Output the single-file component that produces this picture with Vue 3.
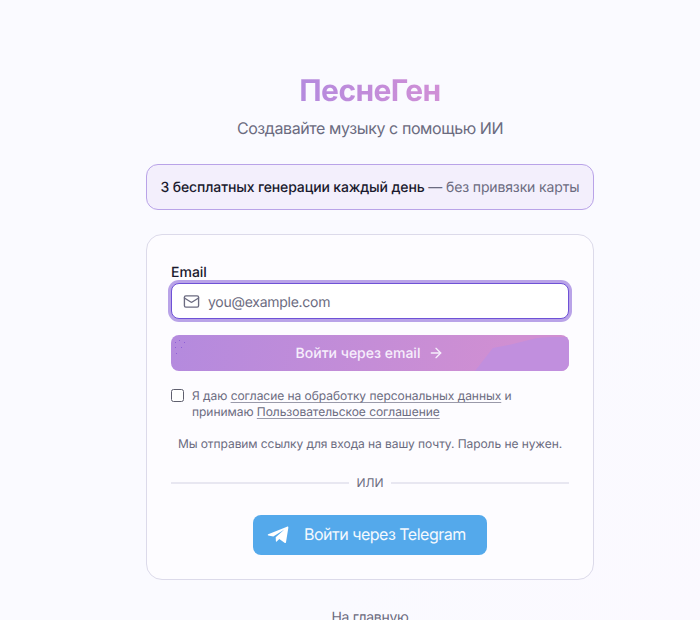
<script setup>
</script>

<template>
  <div class="page">
    <div class="column">
      <header class="head">
        <h1 class="logo">ПеснеГен</h1>
        <p class="sub">Создавайте музыку с помощью ИИ</p>
      </header>
      <div class="banner"><span><strong>3 бесплатных генерации каждый день</strong> — без привязки карты</span></div>
      <div class="card">
        <label class="label">Email</label>
        <div class="field">
          <svg class="mail" width="17" height="17" viewBox="0 0 24 24" fill="none" stroke="currentColor" stroke-width="1.9" stroke-linecap="round" stroke-linejoin="round"><rect x="2" y="4" width="20" height="16" rx="2"/><path d="m22 7-8.97 5.7a1.94 1.94 0 0 1-2.06 0L2 7"/></svg>
          <span class="ph">you@example.com</span>
        </div>
        <button class="primary">
          <span class="blob"></span>
          <span class="dots"><i v-for="n in 6" :key="n" :class="'d' + n"></i></span>
          <span class="ptext">Войти через email</span>
          <svg class="arrow" width="16" height="16" viewBox="0 0 24 24" fill="none" stroke="currentColor" stroke-width="2" stroke-linecap="round" stroke-linejoin="round"><path d="M5 12h14"/><path d="m12 5 7 7-7 7"/></svg>
        </button>
        <div class="consent">
          <span class="box"></span>
          <p>Я даю <a>согласие на обработку персональных данных</a> и принимаю <a>Пользовательское соглашение</a></p>
        </div>
        <p class="note">Мы отправим ссылку для входа на вашу почту. Пароль не нужен.</p>
        <div class="divider"><span></span><em>ИЛИ</em><span></span></div>
        <div class="tgwrap">
          <button class="tg">
            <svg class="plane" width="22" height="18" viewBox="0 0 22 18" fill="#fff"><path d="M1.2 8.2 20 .7c.9-.3 1.5.2 1.3 1.2L19 16.2c-.2.9-.8 1.1-1.5.6l-5.2-3.8-2.6 2.5c-.4.4-.8.2-.8-.3l-.2-3.9L17.4 3.6 6.3 10.4 1.3 9.4c-.7-.2-.7-.9-.1-1.2z"/></svg>
            <span class="tgtext">Войти через Telegram</span>
          </button>
        </div>
      </div>
      <a class="home">На главную</a>
    </div>
  </div>
</template>

<style>
html, body { margin: 0; padding: 0; overflow: hidden; }
</style>

<style scoped>
.page {
  width: 700px;
  height: 620px;
  overflow: hidden;
  background: radial-gradient(circle at 100% 100%, #fbf9ff 0, #fafaff 40%);
  font-family: Inter, "Noto Sans", sans-serif;
  text-rendering: geometricPrecision;
  color: #1a1a2e;
}
.column { width: 448px; margin-left: 146px; padding-top: 73px; }
.head { text-align: center; }
.logo {
  margin: 0;
  font-size: 30px;
  line-height: 36px;
  font-weight: 700;
  letter-spacing: -0.6px;
  background: linear-gradient(90deg, #b48ade, #d08fd6);
  -webkit-background-clip: text;
  background-clip: text;
  color: transparent;
  display: inline-block;
}
.sub { margin: 7px 0 0; font-size: 16px; line-height: 24px; letter-spacing: -0.41px; color: #6b6b80; }
.banner {
  margin-top: 24px;
  height: 46px;
  box-sizing: border-box;
  border: 1px solid #b9a3e8;
  border-radius: 12px;
  background: #f3effc;
  display: flex;
  align-items: center;
  justify-content: center;
  font-size: 14px;
  letter-spacing: -0.135px;
  color: #6b6b80;
}
.banner strong { font-weight: 500; color: #1a1a2e; }
.card {
  margin-top: 24px;
  height: 346px;
  box-sizing: border-box;
  border: 1px solid #dcdaea;
  border-radius: 16px;
  background: #fdfcff;
  padding: 28px 24px 24px;
}
.label { display: block; font-size: 14px; line-height: 20px; font-weight: 500; color: #1a1a2e; }
.field {
  height: 36px;
  box-sizing: border-box;
  border: 1px solid #6f52d6;
  border-radius: 8px;
  background: #fff;
  box-shadow: 0 0 0 3px #b9a3e8;
  display: flex;
  align-items: center;
  padding-left: 11px;
  gap: 8px;
  color: #6b6b80;
}
.mail { flex: none; }
.ph { font-size: 14px; letter-spacing: -0.27px; position: relative; top: 1px; }
.primary {
  position: relative;
  overflow: hidden;
  margin-top: 16px;
  width: 100%;
  height: 36px;
  border: 0;
  border-radius: 8px;
  background: linear-gradient(100deg, #b48ade 0%, #d08fd2 85%);
  color: #f6eefc;
  display: flex;
  align-items: center;
  justify-content: center;
  gap: 8px;
  font: 500 14px Inter, sans-serif;
  text-rendering: geometricPrecision;
  padding: 0;
}
.ptext, .arrow { position: relative; }
.blob {
  position: absolute;
  right: 0; bottom: 0;
  width: 94px; height: 34px;
  background: #c18fde;
  clip-path: polygon(0 100%, 19% 32%, 37% 23%, 66% 3%, 80% 0, 100% 0, 100% 100%);
}
.dots { position: absolute; left: 0; top: 0; width: 20px; height: 24px; }
.dots i { position: absolute; width: 1px; height: 1px; background: #8e5fd6; }
.d1 { left: 8px; top: 5px; } .d2 { left: 4px; top: 7px; } .d3 { left: 13px; top: 7px; }
.d4 { left: 4px; top: 12px; } .d5 { left: 10px; top: 12px; } .d6 { left: 5px; top: 18px; }
.consent { margin-top: 16px; display: flex; gap: 8px; font-size: 12px; line-height: 16px; letter-spacing: -0.04px; color: #6b6b80; }
.consent p { margin: 1px 0 0; }
.consent a { text-decoration: underline; text-decoration-color: #9a9aaa; text-underline-offset: 2px; }
.box {
  flex: none;
  box-sizing: border-box;
  width: 13px; height: 13px;
  margin-top: 2px;
  border: 1px solid #5f5f6e;
  border-radius: 2.5px;
  background: #fff;
}
.note { margin: 16px 0 0; text-align: center; font-size: 12px; line-height: 16px; letter-spacing: -0.07px; color: #6b6b80; }
.divider { margin-top: 23px; display: flex; align-items: center; gap: 7px; }
.divider span { flex: 1; height: 2px; background: #e8e7f1; }
.divider em { font-style: normal; font-size: 12px; line-height: 16px; color: #6b6b80; }
.tgwrap { margin-top: 24px; display: flex; justify-content: center; }
.tg {
  width: 234px;
  height: 40px;
  border: 0;
  border-radius: 8px;
  background: #54a9eb;
  color: #f4f9fe;
  display: flex;
  align-items: center;
  gap: 15px;
  font: 400 16px Inter, sans-serif;
  letter-spacing: -0.5px;
  text-rendering: geometricPrecision;
  padding: 0 0 0 14px;
}
.tgtext { position: relative; top: -1px; }
.plane { flex: none; }
.home { display: block; margin-top: 28px; text-align: center; font-size: 14px; line-height: 20px; letter-spacing: -0.3px; color: #6b6b80; }
</style>
